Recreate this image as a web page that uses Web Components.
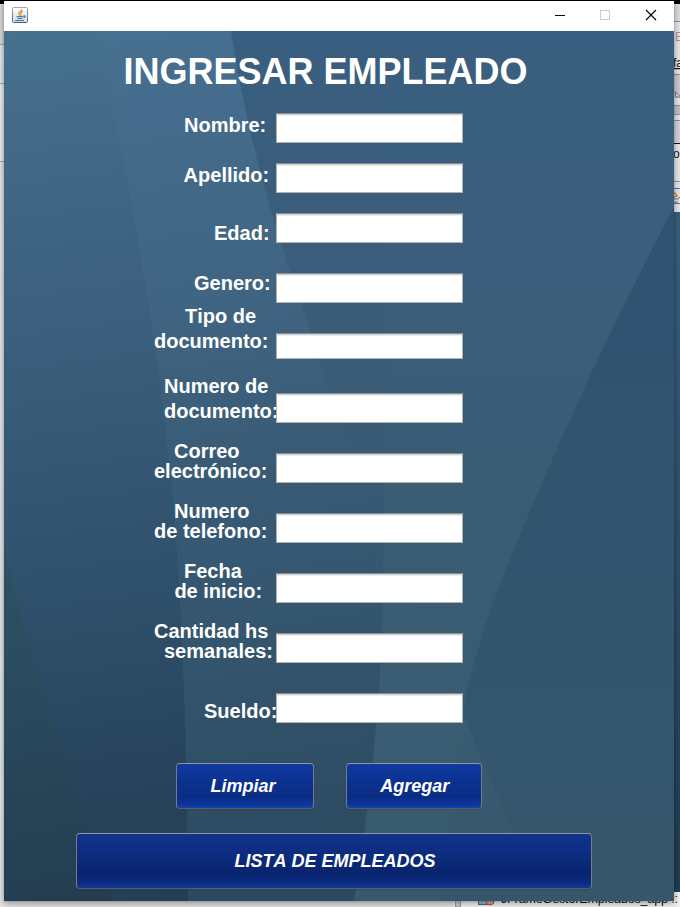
<!DOCTYPE html>
<html lang="es">
<head>
<meta charset="utf-8">
<title>Ingresar empleado</title>
<style>
html,body{margin:0;height:100%;overflow:hidden;background:#e4e5e8}
body{font-family:"Liberation Sans",Arial,sans-serif}
</style>
</head>
<body>
<app-desktop>
  <app-window>
    <title-bar></title-bar>
    <employee-form></employee-form>
  </app-window>
</app-desktop>
<script>
function define(name, html, after) {
  const t = document.createElement('template');
  t.innerHTML = html;
  customElements.define(name, class extends HTMLElement {
    constructor() {
      super();
      this.attachShadow({mode: 'open'}).appendChild(t.content.cloneNode(true));
    }
    connectedCallback() { if (after) after(this, this.shadowRoot); }
  });
}

define('java-icon', `
<style>:host{display:block;width:16px;height:16px}svg{display:block}</style>
<svg width="16" height="16" viewBox="0 0 16 16">
  <defs><linearGradient id="g" x2="0" y2="1"><stop stop-color="#fff"/><stop offset="1" stop-color="#d3dbe2"/></linearGradient>
  <linearGradient id="s" x2="0" y2="1"><stop stop-color="#9aabb9"/><stop offset="1" stop-color="#45647c"/></linearGradient></defs>
  <rect x=".5" y=".5" width="15" height="15" rx="1" fill="url(#g)" stroke="url(#s)"/>
  <path d="M9.8 2.2C10.2 4 6 4.8 6.6 6.6c.2.8 1 1.3 1 1.9M11 4.4c-1.8.6-2.8 1.4-2.2 2.4.5.8.3 1.3-.4 1.9" fill="none" stroke="#e8862a" stroke-width="1.2"/>
  <path d="M4.6 9.5h6.6M5.4 11.4h4.8M3.2 13.5h8.8M11.3 9c2.6-.8 2.4 1.6-.2 2" fill="none" stroke="#4a7594" stroke-width="1.15"/>
</svg>`);

define('title-bar', `
<style>
:host{display:flex;height:30px;background:#fff;box-sizing:border-box;padding:6px 16px 0 8px;justify-content:space-between}
.c{padding-top:2px}
svg{display:block}
</style>
<java-icon></java-icon>
<div class="c"><svg width="104" height="12" viewBox="0 0 104 12" fill="none" shape-rendering="crispEdges">
<path d="M1 6.5h10" stroke="#000"/>
<rect x="46.5" y="1.5" width="9" height="9" stroke="#ccc"/>
<path d="M92 1l10 10M102 1L92 11" stroke="#000" stroke-width="1.1" shape-rendering="auto"/></svg></div>`);

define('text-field', `
<style>
:host{display:block;width:187px;height:30px;box-sizing:border-box}
div{height:100%;box-sizing:border-box;border:1px solid #b2b2b2;border-top-color:#8c8c8c;background:linear-gradient(#d3d3d3 0 1px,#ededed 1px 2px,#fff 2px)}
</style><div></div>`);

define('field-label', `
<style>:host{display:block;height:20px;line-height:20px;font-size:20px;font-weight:bold;color:#fff;white-space:nowrap;font-kerning:none}</style>
<slot></slot>`);

define('push-button', `
<style>
:host{display:block;height:46px}
div{box-sizing:border-box;height:100%;border:1px solid;border-color:#93959a #777b84 #595e69;border-radius:4px;
display:flex;align-items:center;justify-content:center;color:#fff;font:italic bold 18px "Liberation Sans",Arial,sans-serif;font-kerning:none;
background:linear-gradient(#103aa2,#0b318e 45%,#092c83 74%,#0d369b 92%,#1240b4);box-shadow:0 1px 1px #24405560}
:host([deep]) div{background:linear-gradient(#10338e,#0b2b7b 45%,#09246e 72%,#0b2c82 90%,#10379c)}
</style><div><slot></slot></div>`);

define('facet-backdrop', `
<style>:host{display:block;width:670px;height:870px}svg{display:block}</style>
<svg width="670" height="870" viewBox="4 31 670 870">
<defs>
<linearGradient id="a" gradientUnits="userSpaceOnUse" x1="0" y1="31" x2="110" y2="901"><stop stop-color="#47708f"/><stop offset=".32" stop-color="#3c607e"/><stop offset=".65" stop-color="#2f506b"/><stop offset=".82" stop-color="#29465f"/><stop offset="1" stop-color="#243e54"/></linearGradient>
<linearGradient id="b" gradientUnits="userSpaceOnUse" x1="150" y1="31" x2="280" y2="901"><stop stop-color="#476f90"/><stop offset=".3" stop-color="#406583"/><stop offset=".5" stop-color="#395b76"/><stop offset=".7" stop-color="#34556e"/><stop offset="1" stop-color="#2b495f"/></linearGradient>
<linearGradient id="c" gradientUnits="userSpaceOnUse" x1="400" y1="31" x2="400" y2="620"><stop stop-color="#3a5e7f"/><stop offset=".4" stop-color="#3a5d7b"/><stop offset=".72" stop-color="#385a74"/><stop offset="1" stop-color="#34556e" stop-opacity="0"/></linearGradient>
<linearGradient id="d" gradientUnits="userSpaceOnUse" x1="0" y1="210" x2="0" y2="901"><stop stop-color="#305370"/><stop offset=".5" stop-color="#32556f"/><stop offset=".8" stop-color="#34566e"/><stop offset="1" stop-color="#36576a"/></linearGradient>
<linearGradient id="e" gradientUnits="userSpaceOnUse" x1="0" y1="550" x2="70" y2="901"><stop stop-color="#305164"/><stop offset=".5" stop-color="#29485b"/><stop offset="1" stop-color="#243d51"/></linearGradient>
<linearGradient id="f" gradientUnits="userSpaceOnUse" x1="0" y1="31" x2="0" y2="901"><stop stop-color="#3a5e7f"/><stop offset=".35" stop-color="#3a5e7a"/><stop offset=".6" stop-color="#395c73"/><stop offset=".8" stop-color="#3a5c73"/><stop offset="1" stop-color="#35566a"/></linearGradient>
</defs>
<rect x="4" y="31" width="670" height="870" fill="url(#b)"/>
<path d="M4 31H96Q150 270 170 470Q187 640 188 901H4Z" fill="url(#a)"/>
<path d="M4 546Q32 680 113 901H4Z" fill="url(#e)"/>
<path d="M231 31Q250 160 303 310Q335 415 384 520L388 31Z" fill="url(#c)"/>
<path d="M388 31H674V901H354Q382 740 383 580Z" fill="url(#f)"/>
<path d="M386 543L382 640Q378 735 354 901H440L462 715Z" fill="#416277" opacity=".22"/>
<path d="M674 207Q570 404 494 600Q474 655 462 712L542 901H674Z" fill="url(#d)"/>
<path d="M674 207L624 303L587 379L674 384Z" fill="#30527a" opacity=".12"/>
</svg>`);

define('employee-form', `
<style>
:host{display:grid;width:670px;height:870px}
facet-backdrop,main{grid-area:1/1}
main{display:flex;flex-direction:column;height:870px}
h1{margin:21px 0 0 119.5px;height:40px;font:bold 36px/40px "Liberation Sans",Arial,sans-serif;color:#fff;white-space:nowrap;font-kerning:none}
.form{display:grid;grid-template-columns:272px 187px;height:671px}
.labels{display:flex;flex-direction:column}
.fields{display:flex;flex-direction:column;padding-top:21px}
.actions{display:flex;gap:32px;padding-left:172px}
.wide{padding:24px 0 0 72px}
</style>
<facet-backdrop></facet-backdrop>
<main>
 <h1>INGRESAR EMPLEADO</h1>
 <div class="form"><div class="labels"></div><div class="fields"></div></div>
 <div class="actions"><push-button style="width:138px"><span style="margin-right:4px">Limpiar</span></push-button><push-button style="width:136px"><span style="margin-left:1.5px">Agregar</span></push-button></div>
 <div class="wide"><push-button deep style="width:516px;height:56px"><span style="margin-left:2px">LISTA DE EMPLEADOS</span></push-button></div>
</main>`, (host, root) => {
  /* text, indent, space above the line */
  const labels = [['Nombre:',180,23],['Apellido:',179.6,30],['Edad:',210,38],['Genero:',190,30],
    ['Tipo de',181,13],['documento:',150,5],['Numero de',160,25],['documento:',160,5],
    ['Correo',170,20],['electrónico:',150,0],['Numero',170,20],['de telefono:',150,0],
    ['Fecha',180,20],['de inicio:',170.4,0],['Cantidad hs',150,20],['semanales:',160,0],['Sueldo:',200,40]];
  const box = root.querySelector('.labels');
  for (const [text, x, gap] of labels) {
    const l = document.createElement('field-label');
    l.textContent = text;
    l.style.cssText = `padding-left:${x}px;margin-top:${gap}px`;
    box.append(l);
  }
  const fields = root.querySelector('.fields');
  for (const [h, gap] of [[30,20],[30,20],[30,30],[30,30],[26,34],[30,30],[30,30],[30,30],[30,30],[30,30],[30,0]]) {
    const f = document.createElement('text-field');
    f.style.cssText = `height:${h}px;margin-bottom:${gap}px`;
    fields.append(f);
  }
});

define('app-window', `
<style>:host{display:flex;flex-direction:column;width:670px;height:900px;box-shadow:0 2px 7px #0006,0 0 1px #0004}</style><slot></slot>`);

define('app-desktop', `
<style>
:host{display:grid;grid-template:907px/680px;overflow:hidden;width:680px;height:907px}
.back,slot{grid-area:1/1}
.back{display:block}
::slotted(*){grid-area:1/1;margin:1px 0 0 4px}
</style>
<svg class="back" width="680" height="907" viewBox="0 0 680 907" font-family="Liberation Sans,Arial,sans-serif">
<defs><linearGradient id="r" x2="0" y2="1"><stop stop-color="#3a607e"/><stop offset=".5" stop-color="#2f4f6a"/><stop offset="1" stop-color="#213b50"/></linearGradient></defs>
<rect width="680" height="907" fill="#e6e7ea"/>
<rect width="680" height="4" fill="#000"/>
<rect y="4" width="4" height="40" fill="#d9d9d9"/>
<path d="M0 44.500h4M0 83.500h4M0 161.500h4" stroke="#aaa"/>
<rect y="84" width="4" height="77" fill="#edeef0"/>
<rect x="674" y="4" width="6" height="18" fill="#ddd"/>
<path d="M674 21.500h6M674 74.500h6M674 105.500h6M674 114.500h6M674 120.500h6M674 181.500h6" stroke="#8d9198"/>
<rect x="674" y="75" width="6" height="23" fill="#c8cbd2"/>
<rect x="674" y="106" width="6" height="8" fill="#bfc1c9"/>
<rect x="674" y="121" width="6" height="22" fill="#d6d5df"/>
<path d="M674 143.500h6" stroke="#111"/>
<text x="675" y="41" font-size="12" fill="#b39090">E</text>
<text x="673" y="67" font-size="12" fill="#111" text-decoration="underline">fa</text>
<path d="M675 92l6 5h-5z" fill="#eee" stroke="#777"/>
<text x="673" y="158" font-size="12" fill="#111">o</text>
<path d="M674 188.500h6M674 203.500h6" stroke="#56799a"/><path d="M674 192l3 4-3 1" fill="none" stroke="#e8862a" stroke-width="1.5"/><path d="M673 199h5l2-2M673 202h5" fill="none" stroke="#4a7594"/>
<rect x="674" y="212" width="6" height="680" fill="url(#r)"/>
<rect x="0" y="901" width="454" height="6" fill="#e3e3e3"/>
<rect x="454" y="892" width="226" height="15" fill="#f2f2f2"/>
<rect x="455.500" y="892" width="5" height="15" fill="#ccced2" stroke="#999"/>
<rect x="478.500" y="893.500" width="10" height="11" fill="#8fb8d4" stroke="#456780"/>
<circle cx="490" cy="901" r="4" fill="#e79a8d" stroke="#a55"/>
<text x="501" y="903" font-size="12.500" fill="#111" textLength="177">JFrameGestorEmpleados_app ::</text>
</svg>
<slot></slot>`);
</script>
</body>
</html>
